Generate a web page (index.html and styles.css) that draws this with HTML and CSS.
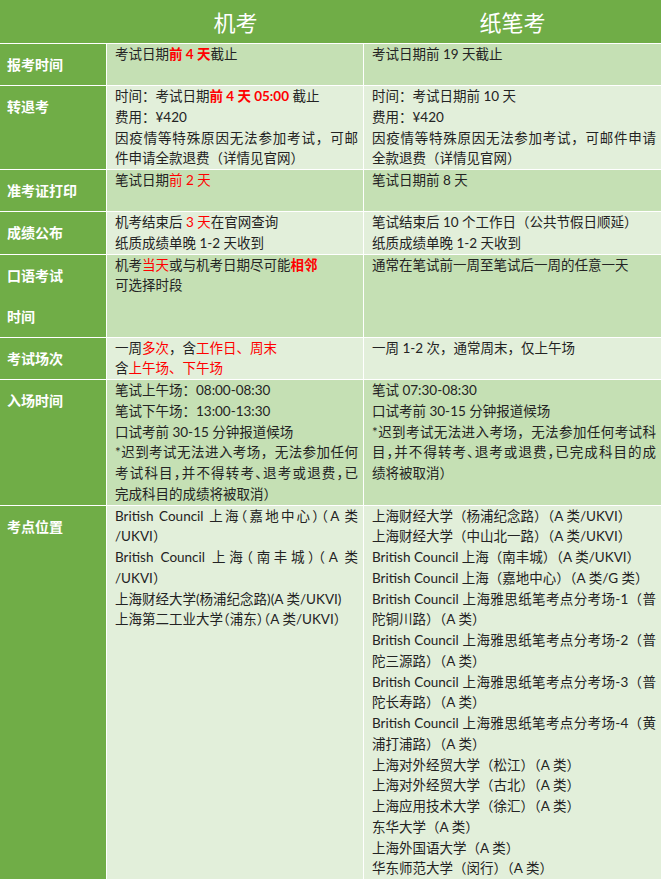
FILE: index.html
```html
<!DOCTYPE html>
<html lang="zh-CN">
<head>
<meta charset="utf-8">
<title>机考与纸笔考对比</title>
<link rel="stylesheet" href="styles.css">
</head>
<body>
<div class="sheet">
  <div class="head">
    <div class="hcell"></div>
    <div class="hcell">机考</div>
    <div class="hcell">纸笔考</div>
  </div>

  <div class="label">报考时间</div>
  <div class="cell dark">
    <div class="ln">考试日期<b class="hl">前 4 天</b>截止</div>
  </div>
  <div class="cell dark">
    <div class="ln">考试日期前 19 天截止</div>
  </div>

  <div class="label">转退考</div>
  <div class="cell light">
    <div class="ln">时间：考试日期<b class="hl">前 4 天 05:00</b> 截止</div>
    <div class="ln">费用：¥420</div>
    <div class="ln j">因疫情等特殊原因无法参加考试，可邮</div>
    <div class="ln">件申请全款退费（详情见官网）</div>
  </div>
  <div class="cell light">
    <div class="ln">时间：考试日期前 10 天</div>
    <div class="ln">费用：¥420</div>
    <div class="ln j">因疫情等特殊原因无法参加考试，可邮件申请</div>
    <div class="ln">全款退费（详情见官网）</div>
  </div>

  <div class="label">准考证打印</div>
  <div class="cell dark">
    <div class="ln">笔试日期<span class="red">前 2 天</span></div>
  </div>
  <div class="cell dark">
    <div class="ln">笔试日期前 8 天</div>
  </div>

  <div class="label">成绩公布</div>
  <div class="cell light">
    <div class="ln">机考结束后 <span class="red">3 天</span>在官网查询</div>
    <div class="ln">纸质成绩单晚 1-2 天收到</div>
  </div>
  <div class="cell light">
    <div class="ln">笔试结束后 10 个工作日（公共节假日顺延）</div>
    <div class="ln">纸质成绩单晚 1-2 天收到</div>
  </div>

  <div class="label">口语考试<br>时间</div>
  <div class="cell dark">
    <div class="ln">机考<span class="red">当天</span>或与机考日期尽可能<b class="hl">相邻</b></div>
    <div class="ln">可选择时段</div>
  </div>
  <div class="cell dark">
    <div class="ln">通常在笔试前一周至笔试后一周的任意一天</div>
  </div>

  <div class="label">考试场次</div>
  <div class="cell light">
    <div class="ln">一周<span class="red">多次</span>，含<span class="red">工作日、周末</span></div>
    <div class="ln">含<span class="red">上午场、下午场</span></div>
  </div>
  <div class="cell light">
    <div class="ln">一周 1-2 次，通常周末，仅上午场</div>
  </div>

  <div class="label">入场时间</div>
  <div class="cell dark">
    <div class="ln">笔试上午场：08:00-08:30</div>
    <div class="ln">笔试下午场：13:00-13:30</div>
    <div class="ln">口试考前 30-15 分钟报道候场</div>
    <div class="ln j">*迟到考试无法进入考场，无法参加任何</div>
    <div class="ln j tight">考试科目，并不得转考、退考或退费，已</div>
    <div class="ln">完成科目的成绩将被取消）</div>
  </div>
  <div class="cell dark">
    <div class="ln">笔试 07:30-08:30</div>
    <div class="ln">口试考前 30-15 分钟报道候场</div>
    <div class="ln j">*迟到考试无法进入考场，无法参加任何考试科</div>
    <div class="ln j tight">目，并不得转考、退考或退费，已完成科目的成</div>
    <div class="ln">绩将被取消）</div>
  </div>

  <div class="label">考点位置</div>
  <div class="cell light tight">
    <div class="ln j">British Council 上海（嘉地中心）（A 类</div>
    <div class="ln">/UKVI）</div>
    <div class="ln j">British Council 上海（南丰城）（A 类</div>
    <div class="ln">/UKVI）</div>
    <div class="ln">上海财经大学(杨浦纪念路)(A 类/UKVI)</div>
    <div class="ln">上海第二工业大学（浦东）（A 类/UKVI）</div>
  </div>
  <div class="cell light">
    <div class="ln">上海财经大学（杨浦纪念路）（A 类/UKVI）</div>
    <div class="ln">上海财经大学（中山北一路）（A 类/UKVI）</div>
    <div class="ln">British Council 上海（南丰城）（A 类/UKVI）</div>
    <div class="ln">British Council 上海（嘉地中心）（A 类/G 类）</div>
    <div class="ln j">British Council 上海雅思纸笔考点分考场-1（普</div>
    <div class="ln">陀铜川路）（A 类）</div>
    <div class="ln j">British Council 上海雅思纸笔考点分考场-2（普</div>
    <div class="ln">陀三源路）（A 类）</div>
    <div class="ln j">British Council 上海雅思纸笔考点分考场-3（普</div>
    <div class="ln">陀长寿路）（A 类）</div>
    <div class="ln j">British Council 上海雅思纸笔考点分考场-4（黄</div>
    <div class="ln">浦打浦路）（A 类）</div>
    <div class="ln">上海对外经贸大学（松江）（A 类）</div>
    <div class="ln">上海对外经贸大学（古北）（A 类）</div>
    <div class="ln">上海应用技术大学（徐汇）（A 类）</div>
    <div class="ln">东华大学（A 类）</div>
    <div class="ln">上海外国语大学（A 类）</div>
    <div class="ln">华东师范大学（闵行）（A 类）</div>
  </div>
</div>
</body>
</html>
```

FILE: styles.css
```css
html, body {
  margin: 0;
  padding: 0;
  background: #ffffff;
}

body {
  font-family: Lato, "Noto Sans CJK SC", sans-serif;
  color: #232323;
}

.sheet {
  display: grid;
  grid-template-columns: 106px 256px 297px;
  grid-auto-rows: minmax(41px, auto);
  gap: 1px;
  width: 661px;
  background: #ffffff;
}

.head {
  grid-column: 1 / -1;
  display: grid;
  grid-template-columns: 107px 257px 297px;
  background: #70ad47;
}

.hcell {
  color: #ffffff;
  font-family: "Noto Sans CJK SC", sans-serif;
  font-size: 22px;
  line-height: 43px;
  text-align: center;
}

.label {
  background: #70ad47;
  color: #ffffff;
  font-family: "Noto Sans CJK SC", sans-serif;
  font-weight: 700;
  font-size: 14px;
  line-height: 41px;
  padding: 0 4px 0 7px;
}

.cell {
  font-size: 13.5px;
  line-height: 20.75px;
  padding: 0 5px 0 8px;
}

.dark {
  background: #c5e0b4;
}

.light {
  background: #e2efda;
}

.ln {
  white-space: nowrap;
}

.ln.j {
  white-space: normal;
  text-align: justify;
  text-align-last: justify;
}

.tight {
  font-feature-settings: "halt";
}

.hl {
  color: #ff0000;
  font-weight: 700;
}

.red {
  color: #ff0000;
}
```
